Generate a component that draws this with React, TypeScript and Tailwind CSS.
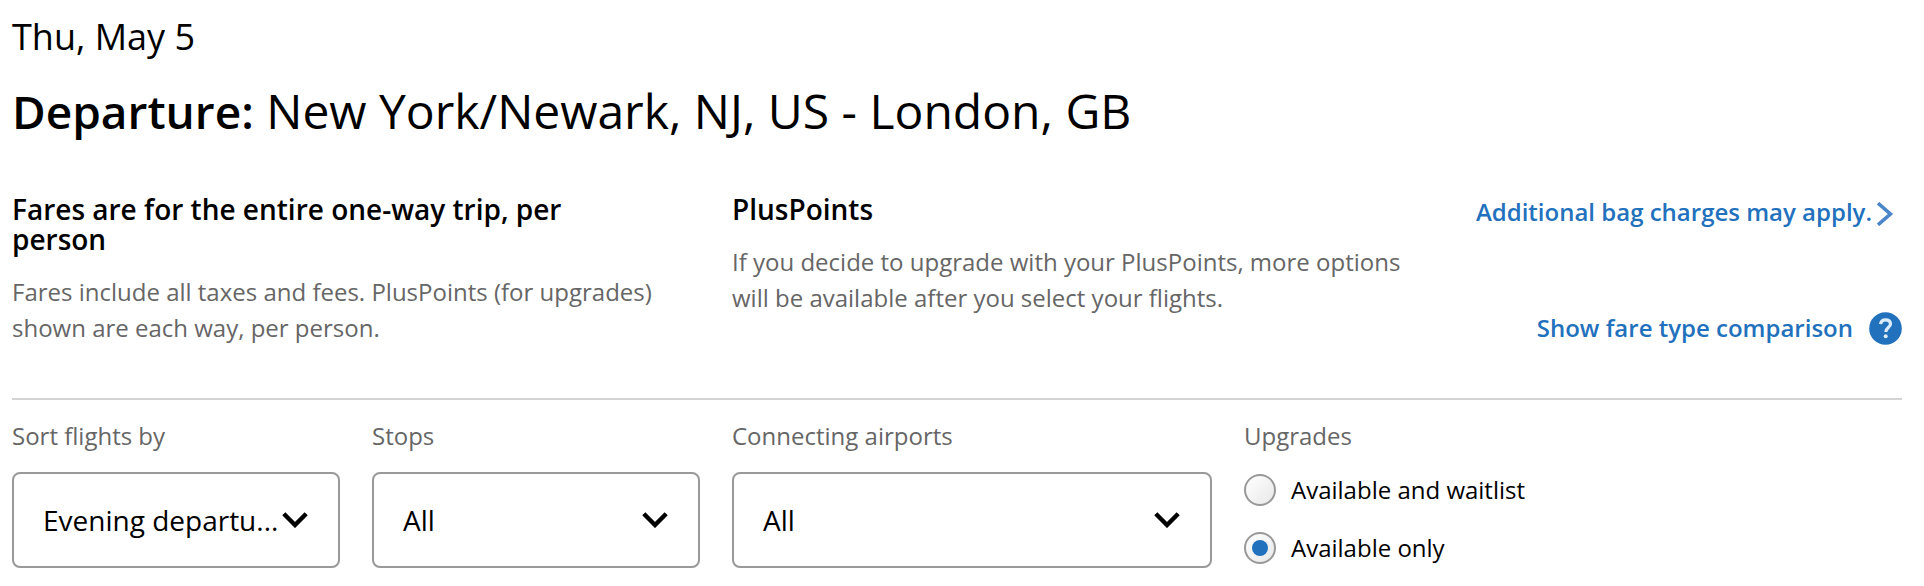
import { useState } from "react";

type FilterSelectProps = {
  id: string;
  label: string;
  options: string[];
  className: string;
};

const Chevron = () => (
  <svg
    viewBox="0 0 26 16"
    className="pointer-events-none absolute right-8 top-10 h-4 w-[26px]"
    fill="none"
    stroke="currentColor"
    strokeWidth="4.4"
    aria-hidden="true"
  >
    <path d="M1.8 1.8 13 13 24.2 1.8" />
  </svg>
);

const FilterSelect = ({ id, label, options, className }: FilterSelectProps) => (
  <div className={className}>
    <label htmlFor={id} className="mb-[18px] block text-[24px]/9 text-[#666]">
      {label}
    </label>

    <div className="relative">
      <select
        id={id}
        className="block h-24 w-full appearance-none rounded-lg border-2 border-[#999] bg-white pl-[29px] pr-14 text-[28px]/10 text-black"
      >
        {options.map((option) => (
          <option key={option}>{option}</option>
        ))}
      </select>
      <Chevron />
    </div>
  </div>
);

const upgradeOptions = ["Available and waitlist", "Available only"];

export default function App() {
  const [upgrade, setUpgrade] = useState("Available only");

  return (
    <main className="bg-white pt-[13px] pr-[22px] pb-4 pl-3 font-['Open_Sans',sans-serif] text-black">
      {/* Heading */}
      <p className="text-[36px]/12">Thu, May 5</p>
      <h1 className="mt-[18px] text-[48px]/16">
        <strong className="text-[46px] font-semibold">Departure:</strong> New
        York/Newark, NJ, US - London, GB
      </h1>

      {/* Fare notes */}
      <section className="mt-[51px] grid grid-cols-[8fr_8fr_5fr] border-b-2 border-[#d4d4d4] pb-[52px]">
        <div className="pr-19">
          <h2 className="text-[28px]/[30px] font-semibold">
            Fares are for the entire one-way trip, per person
          </h2>
          <p className="mt-5 text-[24px]/9 text-[#666]">
            Fares include all taxes and fees. PlusPoints (for upgrades) shown
            are each way, per person.
          </p>
        </div>

        <div className="pr-8">
          <h2 className="text-[28px]/[30px] font-semibold">PlusPoints</h2>
          <p className="mt-5 text-[24px]/9 text-[#666]">
            If you decide to upgrade with your PlusPoints, more options will be
            available after you select your flights.
          </p>
        </div>

        <div className="flex flex-col items-end justify-between whitespace-nowrap text-[24px]/9 font-semibold text-[#2271bd]">
          <a href="#bags" className="flex items-center gap-1 pr-2">
            Additional bag charges may apply.
            <svg
              viewBox="0 0 18 24"
              className="mt-1 h-6 w-[18px]"
              fill="none"
              stroke="#4a86c8"
              strokeWidth="3.6"
              aria-hidden="true"
            >
              <path d="M2 1.2 14.4 12 2 22.8" />
            </svg>
          </a>
          <a href="#fares" className="flex items-center gap-4">
            Show fare type comparison
            <svg viewBox="0 0 33 33" className="size-[33px]" aria-hidden="true">
              <circle cx="16.5" cy="16.5" r="16.3" fill="#2271bd" />
              <path
                d="M11.6 12.2c.3-3 2.2-4.4 4.9-4.4 2.9 0 5 1.5 5 4.2 0 3.5-4.7 3.7-4.7 8"
                fill="none"
                stroke="#dcebf8"
                strokeWidth="3.2"
              />
              <circle cx="16.7" cy="24.3" r="2" fill="#dcebf8" />
            </svg>
          </a>
        </div>
      </section>

      {/* Filters */}
      <form className="mt-[18px] flex flex-wrap gap-8">
        <FilterSelect
          id="sort"
          label="Sort flights by"
          options={["Evening departu..."]}
          className="w-82"
        />
        <FilterSelect
          id="stops"
          label="Stops"
          options={["All"]}
          className="w-82"
        />
        <FilterSelect
          id="airports"
          label="Connecting airports"
          options={["All"]}
          className="w-120"
        />

        <fieldset>
          <legend className="mb-[18px] text-[24px]/9 text-[#666]">
            Upgrades
          </legend>
          <div className="flex flex-col gap-[22px]">
            {upgradeOptions.map((option) => (
              <label
                key={option}
                className="flex items-center gap-[15px] text-[24px]/9"
              >
                <input
                  type="radio"
                  name="upgrades"
                  value={option}
                  checked={upgrade === option}
                  onChange={() => setUpgrade(option)}
                  className="grid size-8 appearance-none place-items-center rounded-full border-2 border-[#999] bg-linear-to-br from-white to-[#e8e8e8] before:size-4 before:rounded-full checked:before:bg-[#2271bd]"
                />
                {option}
              </label>
            ))}
          </div>
        </fieldset>
      </form>
    </main>
  );
}
